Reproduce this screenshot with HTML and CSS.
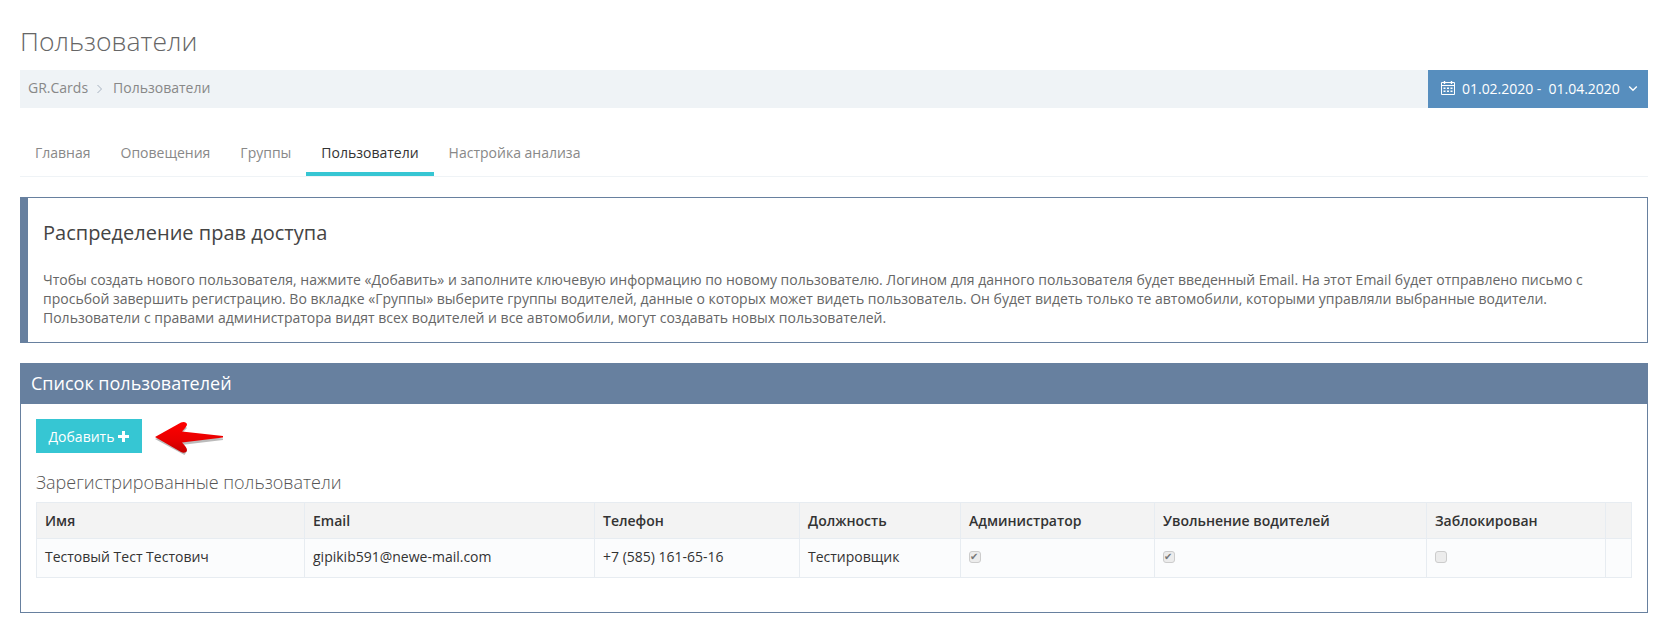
FILE: index.html
```html
<!DOCTYPE html>
<html lang="ru">
<head>
<meta charset="utf-8">
<title>Пользователи</title>
<link rel="stylesheet" href="styles.css">
</head>
<body>
<div class="page">
  <h1 class="page-title">Пользователи</h1>
  <div class="page-bar">
    <ul class="crumbs">
      <li>GR.Cards</li>
      <li class="crumb-sep"><svg width="7" height="10" viewBox="0 0 7 10"><path d="M.5 1l4 4-4 4" fill="none" stroke="#a7b2c0" stroke-width="1"/></svg></li>
      <li>Пользователи</li>
    </ul>
    <div class="date-btn">
      <svg class="cal" width="16" height="16" viewBox="0 0 16 16"><path d="M1.500 2.500h13v12h-13z" fill="none" stroke="#fff"/><path d="M1.500 5.500h13" stroke="#fff"/><path d="M4.500 1v3M11.500 1v3" stroke="#fff" stroke-width="1.400"/><path d="M3.500 7.500h2V9h-2zM7 7.500h2V9H7zM10.500 7.500h2V9h-2zM3.500 10.500h2V12h-2zM7 10.500h2V12H7zM10.500 10.500h2V12h-2z" fill="#fff"/></svg>
      <span class="date-text">01.02.2020 -&nbsp; 01.04.2020</span>
      <svg class="chev" width="10" height="7" viewBox="0 0 10 7"><path d="M1.200 1.500L5 5.200l3.800-3.700" fill="none" stroke="#fff" stroke-width="1.400"/></svg>
    </div>
  </div>
  <nav class="tabs">
    <a class="tab">Главная</a>
    <a class="tab">Оповещения</a>
    <a class="tab">Группы</a>
    <a class="tab tab-active">Пользователи</a>
    <a class="tab">Настройка анализа</a>
  </nav>
  <section class="note">
    <h3 class="note-title">Распределение прав доступа</h3>
    <p class="note-text">Чтобы создать нового пользователя, нажмите «Добавить» и заполните ключевую информацию по новому пользователю. Логином для данного пользователя будет введенный Email. На этот Email будет отправлено письмо с просьбой завершить регистрацию. Во вкладке «Группы» выберите группы водителей, данные о которых может видеть пользователь. Он будет видеть только те автомобили, которыми управляли выбранные водители. Пользователи с правами администратора видят всех водителей и все автомобили, могут создавать новых пользователей.</p>
  </section>
  <section class="panel">
    <header class="panel-head">Список пользователей</header>
    <div class="panel-body">
      <div class="actions">
        <button class="add-btn">Добавить <svg class="plus" width="11" height="11" viewBox="0 0 11 11"><path d="M4 0h3v4h4v3H7v4H4V7H0V4h4z" fill="#fff"/></svg></button>
        <svg class="arrow" width="72" height="36" viewBox="0 0 72 36">
          <defs>
            <linearGradient id="red" x1="0" y1="0" x2="0" y2="1"><stop offset="0" stop-color="#ff0000"/><stop offset=".6" stop-color="#e80000"/><stop offset="1" stop-color="#c40000"/></linearGradient>
          </defs>
          <path d="M1 18L30 4l3 3-6 6 42 4.500v1.500L27 24l6 6-2.500 4z" fill="#555" opacity=".4" transform="translate(0 1)"/>
          <path d="M1 17L27 2.500c2.500-1.300 6-.5 6 2 0 1.500-2 3.500-5 7l41 4.500v1.500L28 22.500c3 3 5 5.500 5 7.500 0 2.500-3.500 3.500-6 2z" fill="url(#red)"/>
        </svg>
      </div>
      <h4 class="table-title">Зарегистрированные пользователи</h4>
      <table class="users">
        <colgroup>
          <col class="c-name"><col class="c-email"><col class="c-phone"><col class="c-job"><col class="c-admin"><col class="c-fire"><col class="c-block"><col>
        </colgroup>
        <thead>
          <tr><th>Имя</th><th>Email</th><th>Телефон</th><th>Должность</th><th>Администратор</th><th>Увольнение водителей</th><th>Заблокирован</th><th></th></tr>
        </thead>
        <tbody>
          <tr>
            <td>Тестовый Тест Тестович</td>
            <td>gipikib591@newe-mail.com</td>
            <td>+7 (585) 161-65-16</td>
            <td>Тестировщик</td>
            <td><input class="check" type="checkbox" checked disabled></td>
            <td><input class="check" type="checkbox" checked disabled></td>
            <td><input class="check" type="checkbox" disabled></td>
            <td></td>
          </tr>
        </tbody>
      </table>
    </div>
  </section>
</div>
</body>
</html>
```
FILE: styles.css
```css
* { box-sizing: border-box; }
html, body { margin: 0; padding: 0; background: #fff; }
body { font-family: "Open Sans", sans-serif; font-size: 14px; color: #333; }
.page { padding: 0 20px; height: 633px; overflow: hidden; }
.page-title { margin: 0; padding-top: 23px; height: 70px; font-size: 26.500px; line-height: 36px; font-weight: 300; color: #666; }
.page-bar { display: flex; justify-content: space-between; height: 38px; background: #eff3f6; }
.crumbs { display: flex; align-items: center; gap: 9px; list-style: none; margin: 0; padding: 0 0 0 8px; height: 35px; font-size: 14px; color: #888; }
.crumb-sep { display: flex; align-items: center; padding: 2px 0 0 0; }
.date-btn { display: flex; align-items: center; width: 220px; padding: 0 0 2px 12px; background: #578ebe; color: #fff; font-size: 14px; }
.cal { flex: none; margin-right: 6px; }
.date-text { white-space: nowrap; letter-spacing: -0.020px; }
.chev { margin-left: 8px; }
.tabs { display: flex; margin-top: 26px; height: 43px; border-bottom: 1px solid #eff3f6; }
.tab { display: block; padding: 0 15px; height: 42px; line-height: 37px; font-size: 14px; color: #888; border-bottom: 4px solid transparent; }
.tab-active { color: #333; border-bottom-color: #36c6d3; }
.note { margin-top: 20px; height: 146px; padding: 0 15px 0 15px; border: 1px solid #67809f; border-left-width: 8px; }
.note-title { margin: 0; padding-top: 21px; height: 64px; font-size: 20px; line-height: 28px; font-weight: 400; color: #444; }
.note-text { margin: 0; padding-top: 8px; font-size: 14px; line-height: 19px; color: #666; }
.panel { margin-top: 20px; height: 250px; border: 1px solid #67809f; }
.panel-head { height: 40px; padding: 0 10px; background: #67809f; color: #fff; font-size: 18px; line-height: 38px; }
.panel-body { padding: 15px 15px 0; }
.actions { display: flex; align-items: center; gap: 12px; height: 34px; }
.add-btn { display: flex; align-items: center; justify-content: center; gap: 4px; width: 106px; height: 34px; padding: 0; border: 0; background: #36c6d3; color: #fff; font: 400 14px "Open Sans", sans-serif; }
.arrow { flex: none; margin-top: 3px; }
.table-title { margin: 0; padding-top: 17px; height: 49px; font-size: 18px; line-height: 24px; font-weight: 300; color: #555; }
.users { width: 1596px; border-collapse: collapse; table-layout: fixed; font-size: 14px; }
.users th, .users td { padding: 0 8px; border: 1px solid #e7ecf1; text-align: left; vertical-align: middle; white-space: nowrap; }
.users th { height: 36px; background: #f3f3f3; font-weight: 600; color: #333; }
.users td { height: 39px; padding-bottom: 3px; background: #fbfcfd; color: #333; }
.c-name { width: 268px; }
.c-email { width: 290px; }
.c-phone { width: 205px; }
.c-job { width: 161px; }
.c-admin { width: 194px; }
.c-fire { width: 272px; }
.c-block { width: 179px; }
.check { appearance: none; display: block; position: relative; margin: 0; width: 12px; height: 12px; border: 1px solid #ccc; border-radius: 3px; background: #ececec; }
.check:checked::before { content: "✔"; position: absolute; left: 0; top: -2px; font: 10px/13px "DejaVu Sans", sans-serif; color: #777; }
```
